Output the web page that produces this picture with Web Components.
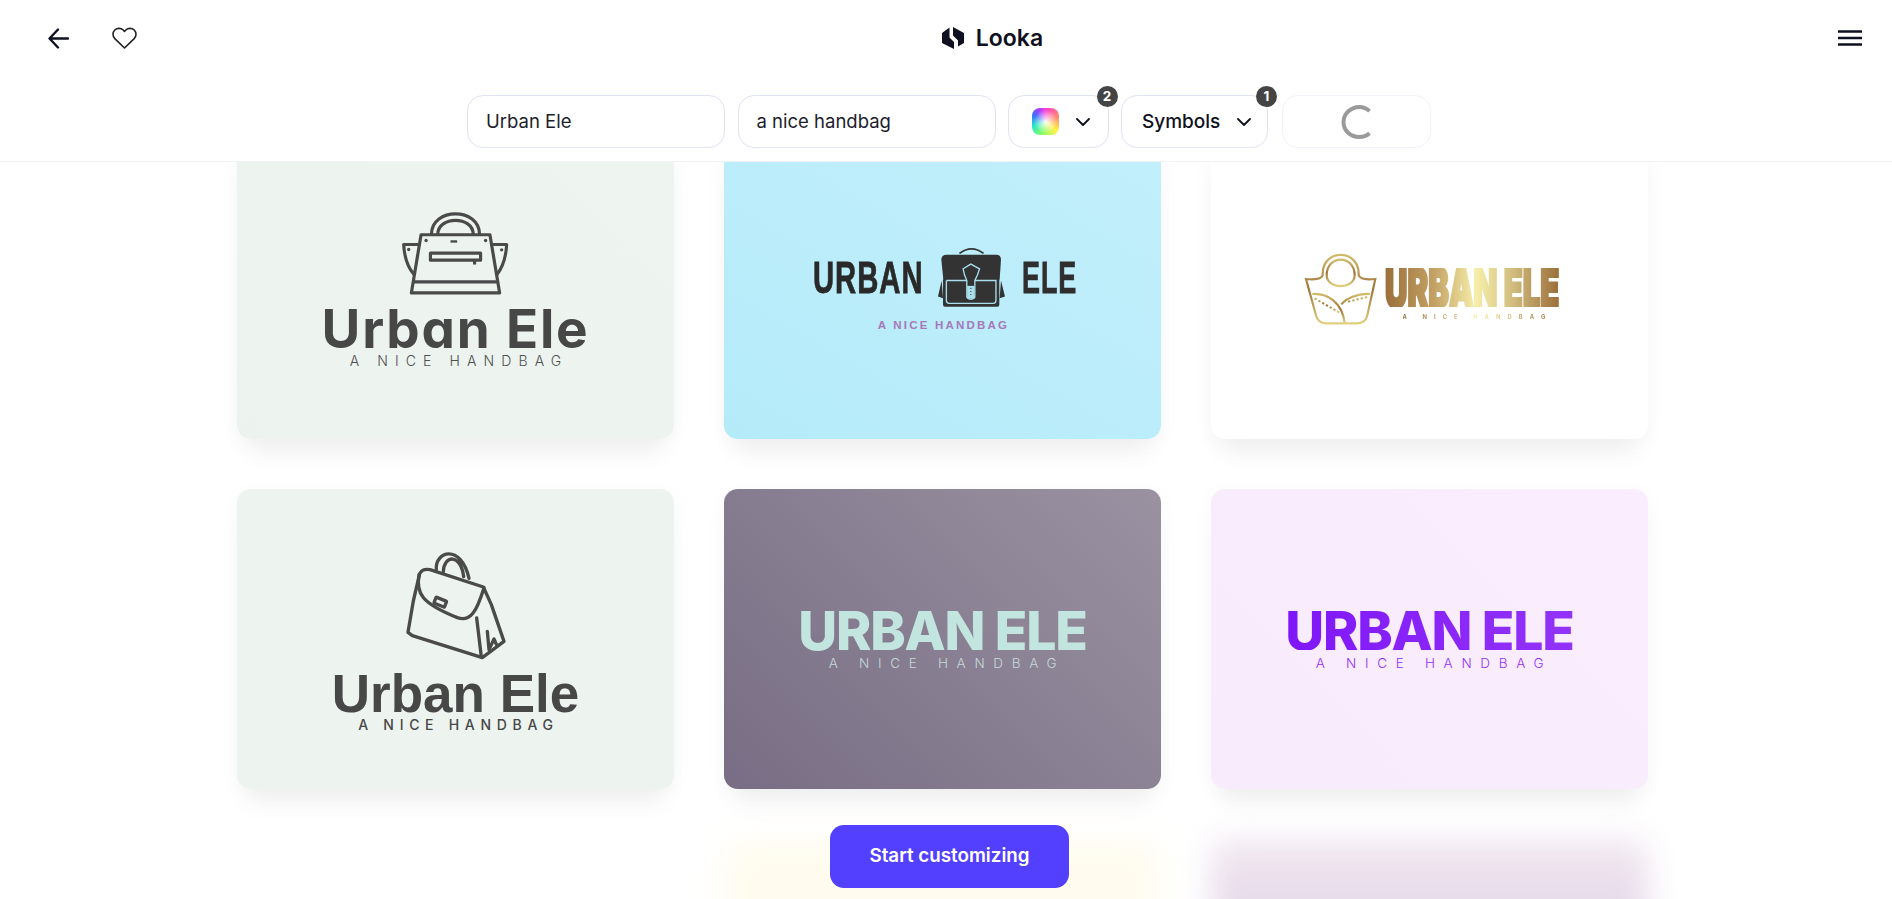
<!DOCTYPE html>
<html lang="en">
<head>
<meta charset="utf-8">
<title>Looka</title>
<style>
  html, body { margin: 0; height: 100%; overflow: hidden; background: #fff; }
  body { font-family: Inter, "Liberation Sans", sans-serif; color: #0f1020; }
</style>
</head>
<body>
<looka-app></looka-app>
<script>
class LookaNav extends HTMLElement {
  constructor() {
    super();
    this.attachShadow({mode: "open"}).innerHTML = `
    <style>
      :host { display: flex; justify-content: space-between; align-items: center; height: 76px; margin-bottom: 19px; padding: 0 30px 0 48px; }
      .left { display: flex; align-items: center; gap: 43px; width: 99px; }
      svg { display: block; flex: none; }
      .brand { display: flex; align-items: center; gap: 12px; font: 600 23px/1 Inter, sans-serif; color: #0f1020; }
    </style>
    <div class="left">
      <svg width="21" height="21" viewBox="0 0 21 21" fill="none" stroke="#0f1020" stroke-width="2.4" stroke-linecap="round" stroke-linejoin="round"><path d="M10 1.5 1.5 10.5 10 19.5M2 10.5h18"/></svg>
      <svg width="25" height="22" viewBox="0 0 25 22" fill="none" stroke="#222" stroke-width="1.6" stroke-linejoin="round"><path d="M12.5 21 2.8 11.6C.4 9.2.4 5.4 2.8 3 5.1.8 8.9.8 11.2 3l1.3 1.5L13.8 3c2.3-2.2 6.1-2.2 8.4 0 2.4 2.4 2.4 6.2 0 8.6z"/></svg>
    </div>
    <div class="brand">
      <svg width="22" height="22" viewBox="0 0 22 22" fill="#0f1020"><path d="M7.5 .5V10.500L12 15V22L0 16V6ZM11 0 22 6V16L16 19.500V13.500L11 8.500Z"/></svg>
      <span>Looka</span>
    </div>
    <svg width="24" height="16" viewBox="0 0 24 16" fill="none" stroke="#0f1020" stroke-width="2.4"><path d="M0 1.5h24M0 8h24M0 14.5h24"/></svg>`;
  }
}
customElements.define("looka-nav", LookaNav);

class SearchField extends HTMLElement {
  constructor() {
    super();
    this.attachShadow({mode: "open"}).innerHTML = `
    <style>
      :host { display: flex; align-items: center; box-sizing: border-box; width: 258px; height: 53px; padding: 0 18px; background: #fff; border: 1px solid #dfe3f2; border-radius: 16px; font: 400 18.5px/1 Inter, sans-serif; color: #1c1d2c; }
    </style>
    <slot></slot>`;
  }
}
customElements.define("search-field", SearchField);

class FilterButton extends HTMLElement {
  constructor() {
    super();
    this.attachShadow({mode: "open"});
  }
  connectedCallback() { this.render(); }
  render() {
    this.shadowRoot.innerHTML = `
    <style>
      :host { display: flex; align-items: center; position: relative; box-sizing: border-box; height: 53px; background: #fff; border: 1px solid #dfe3f2; border-radius: 16px; font: 500 19px/1 Inter, sans-serif; color: #0f1020; }
      .chev { display: block; flex: none; }
      .badge { position: absolute; top: -10px; right: -10px; width: 21px; height: 21px; border-radius: 50%; background: #444; color: #fff; font: 700 13.5px/21px Inter, sans-serif; text-align: center; }
    </style>
    <slot></slot>
    <svg class="chev" width="14" height="8" viewBox="0 0 14 8" fill="none" stroke="#0f1020" stroke-width="1.8" stroke-linecap="round" stroke-linejoin="round"><path d="M1 1l6 6 6-6"/></svg>
    <span class="badge">${this.getAttribute("badge")}</span>`;
  }
}
customElements.define("filter-button", FilterButton);

class ColorSwatch extends HTMLElement {
  constructor() {
    super();
    this.attachShadow({mode: "open"}).innerHTML = `
    <style>
      :host { display: block; width: 27px; height: 27px; border-radius: 8px;
        background: radial-gradient(circle at 50% 50%, rgba(255,255,255,.95) 0, rgba(255,255,255,0) 62%),
          conic-gradient(from 0deg at 50% 50%, #ff3fd0 0deg, #ff8a70 70deg, #fff24a 130deg, #7dff6a 200deg, #29e6c8 250deg, #3b6cff 300deg, #b33bff 335deg, #ff3fd0 360deg); }
    </style>`;
  }
}
customElements.define("color-swatch", ColorSwatch);

class LoadingBox extends HTMLElement {
  constructor() {
    super();
    this.attachShadow({mode: "open"}).innerHTML = `
    <style>
      :host { display: flex; align-items: center; justify-content: center; box-sizing: border-box; width: 149px; height: 53px; margin-left: 1.5px; border: 1px solid #f1f2fa; border-radius: 16px; background: #fff; }
    </style>
    <svg width="32" height="34" viewBox="0 0 32 34" fill="none" stroke="#9a9a9a" stroke-width="4"><path d="M28.5 6.2C25.8 3.5 22.5 2 18.5 2 10 2 2.5 8.5 2.5 17s7 15 16 15c3.8 0 7-1.2 10-3.8"/></svg>`;
  }
}
customElements.define("loading-box", LoadingBox);

const GOLD = "linear-gradient(90deg,#9b6f3a 0%,#c3a164 28%,#f6eea9 52%,#dccb8b 68%,#9b6f3a 100%)";

const LOGOS = {
  tote: `
    <svg width="107" height="82" viewBox="515 158 320 245" fill="none" stroke="#4a4a4a" stroke-width="9.5" stroke-linejoin="round">
      <path d="M603 222C603 140 747 140 747 222M622 222C622 166 728 166 728 222"/>
      <path d="M572 223H778L807 397H543ZM552 364H798"/>
      <path d="M570 252H520C522 290 532 320 551 342M780 252H828C826 290 816 320 799 342"/>
      <rect x="600" y="278" width="150" height="21"/>
      <path d="M732 300V312"/>
      <path d="M660 243H680" stroke-width="7"/>
      <g fill="#4a4a4a" stroke="none"><circle cx="587" cy="240" r="5"/><circle cx="765" cy="240" r="5"/><circle cx="535" cy="267" r="5"/><circle cx="813" cy="268" r="5"/></g>
    </svg>
    <div class="word" style="font:700 53px/38px Inter,sans-serif;font-feature-settings:'cv11';color:#474747;margin-top:15px;letter-spacing:1.8px">Urban Ele</div>
    <div class="tag" style="font:300 14px/10px Inter,sans-serif;color:#4f4f4f;margin:8px -7px 0 0;letter-spacing:7.1px">A NICE HANDBAG</div>`,
  satchel: `
    <div class="row">
      <span class="squeeze" style="width:108px;--sx:.65;font:700 45px/32px 'Liberation Sans',sans-serif;letter-spacing:1.5px;color:#292929;-webkit-text-stroke:.8px #292929"><span>URBAN</span></span>
      <svg width="67" height="59" viewBox="652 265 200 176" style="margin:-1px 17px 0 17px">
        <path d="M716 281Q752 254 788 281" fill="none" stroke="#333" stroke-width="5"/>
        <path d="M662 300Q662 285 678 285H826Q840 285 840 300L836 360H668Z" fill="#333"/>
        <path d="M663 362 652 410 667 415ZM840 362 852 410 836 415Z" fill="#333"/>
        <rect x="667" y="355" width="168" height="85" rx="6" fill="#333"/>
        <path d="M677 362V422Q677 430 685 430H817Q825 430 825 422V362H677" fill="none" stroke="#a8dfeb" stroke-width="4"/>
        <path d="M727 327 750 313 776 327 770 345 762 362V412Q750 424 738 412V362L731 345Z" fill="#333" stroke="#a8dfeb" stroke-width="4"/>
        <rect x="739" y="378" width="22" height="38" fill="#a8dfeb"/>
        <path d="M750 384V408" stroke="#333" stroke-width="3" stroke-dasharray="3 6"/>
      </svg>
      <span class="squeeze" style="width:51px;--sx:.6;font:700 45px/32px 'Liberation Sans',sans-serif;letter-spacing:1.5px;color:#2f2f2f;-webkit-text-stroke:.8px #2f2f2f"><span>ELE</span></span>
    </div>
    <div class="tag" style="font:700 11.5px/9px 'Liberation Sans',sans-serif;color:#a678b8;margin:14px -2px 0 0;letter-spacing:2.2px">A NICE HANDBAG</div>`,
  gold: `
    <div class="row" style="align-items:flex-start;margin-left:5px">
      <svg width="71" height="72" viewBox="283 279 213 214" fill="none" stroke="url(#goldgrad)" stroke-width="6.5" style="margin-right:9px">
        <defs><linearGradient id="goldgrad" x1="0" x2="0" y1="0" y2="1"><stop offset="0" stop-color="#d2bb68"/><stop offset=".5" stop-color="#a0743a"/><stop offset="1" stop-color="#e0cf7e"/></linearGradient></defs>
        <path d="M286 356C310 358 330 358 336 345V340C336 265 444 265 444 340V345C450 358 470 358 494 356L470 465Q465 489 440 489H345Q322 489 316 465Z"/>
        <path d="M348 345C348 282 432 282 432 345 432 388 348 388 348 345Z"/>
        <path d="M305 401C350 398 395 425 402 489M478 401C440 398 405 415 392 432"/>
        <path d="M312 414 388 458M412 424 470 410" stroke-width="6" stroke-dasharray="7 6"/>
        <path d="M376 394H400" stroke-width="6" stroke-dasharray="10 3"/>
      </svg>
      <div style="margin-top:15px">
        <span class="squeeze" style="width:175px;--sx:.575;font:900 54px/39px Inter,sans-serif"><span class="gold" style="-webkit-text-stroke:3px transparent">URBAN ELE</span></span>
        <div class="tag gold" style="font:700 5.8px/5px Inter,sans-serif;margin:7px 0 0 18px;letter-spacing:7.1px;width:145px;text-align:left">A NICE HANDBAG</div>
      </div>
    </div>`,
  backpack: `
    <svg width="100" height="112" viewBox="526 206 300 334" fill="none" stroke="#4a4a4a" stroke-width="10" stroke-linejoin="round" stroke-linecap="round">
      <path d="M617 270C612 215 690 190 715 296M638 276C640 226 690 220 699 291"/>
      <path d="M567 282Q575 266 598 270L758 322 782 375 820 485 755 534 545 468 532 458 548 364Z"/>
      <path d="M565 285C556 340 570 370 680 414 720 428 738 395 760 324"/>
      <rect x="612" y="358" width="34" height="19" rx="2" transform="rotate(22 629 367)"/>
      <path d="M738 415 752 532M770 455 775 510 790 478 797 494"/>
    </svg>
    <div class="word" style="font:700 53px/38px 'Liberation Sans',sans-serif;color:#474747;margin-top:15px">Urban Ele</div>
    <div class="tag" style="font:500 14px/10px Inter,sans-serif;color:#474747;margin:7px -6px 0 0;letter-spacing:5.7px">A NICE HANDBAG</div>`,
  mint: `
    <div class="word" style="font:800 53.5px/39px Inter,sans-serif;color:#c3e5df;letter-spacing:-1.2px">URBAN ELE</div>
    <div class="tag" style="font:300 13.5px/10px Inter,sans-serif;color:#c3d8d8;margin:8px -9px 0 0;letter-spacing:8.7px">A NICE HANDBAG</div>`,
  violet: `
    <div class="word" style="font:800 53.5px/39px Inter,sans-serif;letter-spacing:-1.2px;background:linear-gradient(90deg,#7f16f8,#9333f8);-webkit-background-clip:text;background-clip:text;-webkit-text-fill-color:transparent">URBAN ELE</div>
    <div class="tag" style="font:300 13.5px/10px Inter,sans-serif;color:#9333f8;margin:8px -9px 0 0;letter-spacing:8.7px">A NICE HANDBAG</div>`
};

class LogoCard extends HTMLElement {
  constructor() {
    super();
    this.attachShadow({mode: "open"});
  }
  connectedCallback() {
    const logo = LOGOS[this.getAttribute("logo")] || "";
    this.shadowRoot.innerHTML = `
    <style>
      :host { display: flex; flex-direction: column; align-items: center; justify-content: center; height: 300px; border-radius: 14px; background: var(--bg, #fff); box-shadow: 0 24px 26px -10px rgba(0,0,0,.05), 0 4px 24px rgba(0,0,0,.03); }
      :host([blurred]) { filter: blur(15px); box-shadow: none; }
      :host([blank]) { box-shadow: none; }
      .row { display: flex; align-items: center; }
      .word, .tag { white-space: nowrap; }
      svg { display: block; flex: none; overflow: visible; }
      .squeeze { display: block; white-space: nowrap; }
      .squeeze > span { display: inline-block; transform-origin: 0 50%; transform: scaleX(var(--sx)); }
      .gold { background: ${GOLD}; -webkit-background-clip: text; background-clip: text; -webkit-text-fill-color: transparent; }
    </style>
    ${logo}`;
  }
}
customElements.define("logo-card", LogoCard);

class CtaButton extends HTMLElement {
  constructor() {
    super();
    this.attachShadow({mode: "open"}).innerHTML = `
    <style>
      :host { display: flex; align-items: center; justify-content: center; position: absolute; left: 830px; bottom: 11px; width: 239px; height: 63px; border-radius: 14px; background: #5340ff; color: #fff; font: 600 18.8px/1 Inter, sans-serif; }
    </style>
    <slot></slot>`;
  }
}
customElements.define("cta-button", CtaButton);

class LookaApp extends HTMLElement {
  constructor() {
    super();
    this.attachShadow({mode: "open"}).innerHTML = `
    <style>
      :host { display: flex; flex-direction: column; position: relative; height: 100vh; overflow: hidden; }
      header { flex: none; height: 162px; box-sizing: border-box; border-bottom: 1px solid #f3f3f5; background: #fff; }
      .search { display: flex; justify-content: center; gap: 12.5px; padding-left: 6px; }
      main { flex: 1; min-height: 0; overflow: hidden; }
      .grid { display: grid; grid-template-columns: repeat(3, 1fr); gap: 50px; width: 1411px; margin: -23px 0 0 237px; }
      filter-button.colors { width: 100.5px; padding-left: 23px; gap: 17px; }
      filter-button.symbols { width: 147px; padding-left: 20px; gap: 17px; }
    </style>
    <header>
      <looka-nav></looka-nav>
      <div class="search">
        <search-field>Urban Ele</search-field>
        <search-field>a nice handbag</search-field>
        <filter-button class="colors" badge="2"><color-swatch></color-swatch></filter-button>
        <filter-button class="symbols" badge="1">Symbols</filter-button>
        <loading-box></loading-box>
      </div>
    </header>
    <main>
      <div class="grid">
        <logo-card logo="tote" style="--bg:linear-gradient(45deg,#ecf3ef,#eef4f0)"></logo-card>
        <logo-card logo="satchel" style="--bg:linear-gradient(30deg,#b5ebf9,#c2effb)"></logo-card>
        <logo-card logo="gold" style="--bg:#fff"></logo-card>
        <logo-card logo="backpack" style="--bg:#edf3ef"></logo-card>
        <logo-card logo="mint" style="--bg:linear-gradient(45deg,#786d84,#9a92a1)"></logo-card>
        <logo-card logo="violet" style="--bg:linear-gradient(45deg,#f7ebfc,#f9edfe)"></logo-card>
        <logo-card blank style="--bg:#fff"></logo-card>
        <logo-card blurred style="--bg:#fffcef"></logo-card>
        <logo-card blurred style="--bg:linear-gradient(180deg,#f2e8f1,#e7dcea 60px)"></logo-card>
      </div>
    </main>
    <cta-button>Start customizing</cta-button>`;
  }
}
customElements.define("looka-app", LookaApp);
</script>
</body>
</html>
